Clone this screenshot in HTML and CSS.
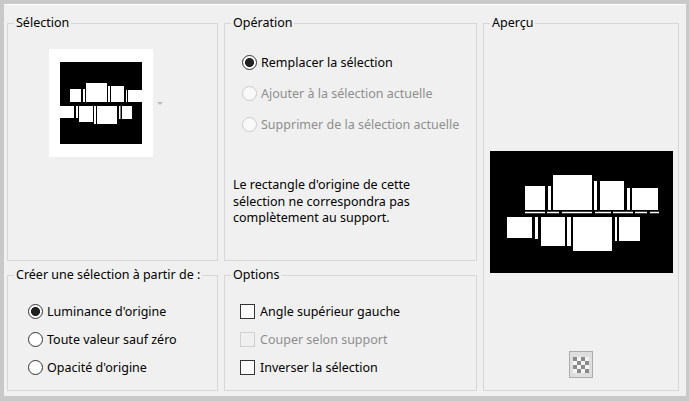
FILE: index.html
```html
<!DOCTYPE html>
<html lang="fr">
<head>
    <meta charset="UTF-8">
    <title>Sélection</title>
    <link rel="stylesheet" href="styles.css">
</head>
<body>
    <div class="dialog">
        <!-- Source selection -->
        <fieldset class="group">
            <legend class="group__title">Sélection</legend>
            <div class="thumb-row">
                <div class="thumb">
                    <svg width="82" height="82" viewBox="0 0 82 82">
                        <rect width="82" height="82" fill="#000"/>
                        <g fill="#fff">
                            <rect x="10" y="27" width="11" height="13"/>
                            <rect x="23" y="27" width="2" height="13"/>
                            <rect x="26" y="21" width="21" height="19"/>
                            <rect x="48" y="24" width="2" height="16"/>
                            <rect x="51" y="24" width="13" height="16"/>
                            <rect x="66" y="28" width="1" height="12"/>
                            <rect x="68" y="28" width="14" height="12"/>
                            <rect x="0" y="44" width="14" height="12"/>
                            <rect x="16" y="44" width="2" height="12"/>
                            <rect x="19" y="44" width="14" height="16"/>
                            <rect x="34" y="44" width="2" height="18"/>
                            <rect x="37" y="44" width="20" height="18"/>
                            <rect x="59" y="44" width="1.5" height="13"/>
                            <rect x="62" y="44" width="10" height="13"/>
                        </g>
                    </svg>
                </div>
                <span class="drop-arrow"></span>
            </div>
        </fieldset>

        <!-- Operation -->
        <fieldset class="group">
            <legend class="group__title">Opération</legend>
            <div class="choices choices--op">
                <label class="opt"><input type="radio" name="op" class="radio" checked>Remplacer la sélection</label>
                <label class="opt opt--off"><input type="radio" name="op" class="radio" disabled>Ajouter à la sélection actuelle</label>
                <label class="opt opt--off"><input type="radio" name="op" class="radio" disabled>Supprimer de la sélection actuelle</label>
            </div>
            <p class="note">Le rectangle d'origine de cette<br>sélection ne correspondra pas<br>complètement au support.</p>
        </fieldset>

        <!-- Preview -->
        <fieldset class="group group--preview">
            <legend class="group__title">Aperçu</legend>
            <div class="preview">
                <svg class="preview__img" width="183" height="122" viewBox="0 0 183 122">
                    <rect width="183" height="122" fill="#000"/>
                    <g fill="#fff">
                        <rect x="35" y="35" width="20" height="24"/>
                        <rect x="58" y="35" width="3" height="24"/>
                        <rect x="63" y="24" width="39" height="35"/>
                        <rect x="104" y="30" width="3" height="29"/>
                        <rect x="110" y="30" width="24" height="29"/>
                        <rect x="137" y="37" width="3" height="22"/>
                        <rect x="142" y="37" width="26" height="22"/>
                        <rect x="17" y="66" width="25" height="21"/>
                        <rect x="45" y="66" width="3" height="22"/>
                        <rect x="51" y="66" width="24" height="29"/>
                        <rect x="77" y="66" width="4" height="29"/>
                        <rect x="83" y="66" width="39" height="34"/>
                        <rect x="125" y="66" width="2" height="24"/>
                        <rect x="129" y="66" width="21" height="24"/>
                    </g>
                    <line x1="35" y1="61.5" x2="169" y2="61.5" stroke="#fff" stroke-width="1.5" stroke-dasharray="20 2 12 3 30 3 16 2"/>
                </svg>
                <div class="swatch"><span class="swatch__checker"></span></div>
            </div>
        </fieldset>

        <!-- Create from -->
        <fieldset class="group">
            <legend class="group__title">Créer une sélection à partir de :</legend>
            <div class="choices choices--src">
                <label class="opt"><input type="radio" name="src" class="radio" checked>Luminance d'origine</label>
                <label class="opt"><input type="radio" name="src" class="radio">Toute valeur sauf zéro</label>
                <label class="opt"><input type="radio" name="src" class="radio">Opacité d'origine</label>
            </div>
        </fieldset>

        <!-- Options -->
        <fieldset class="group">
            <legend class="group__title">Options</legend>
            <div class="choices choices--opts">
                <label class="opt opt--check"><input type="checkbox" class="check">Angle supérieur gauche</label>
                <label class="opt opt--check opt--off"><input type="checkbox" class="check" disabled>Couper selon support</label>
                <label class="opt opt--check"><input type="checkbox" class="check">Inverser la sélection</label>
            </div>
        </fieldset>
    </div>
</body>
</html>
```

FILE: styles.css
```css
:root {
	/* COLORS */
	--frame: #c9c9c9;
	--face: #f0f0f0;
	--line: #d7d7d7;
	--ink: #000;
	--muted: #8e8e8e;

	font-size: 12.5px;
	font-family: "Noto Sans", "Open Sans", sans-serif;
}

body {
	background-color: var(--frame);
	color: var(--ink);
	margin: 0;
}

.dialog {
	background-color: var(--face);
	border-top: 1px solid #fff;
	box-sizing: border-box;
	display: grid;
	gap: 6px;
	grid-template-columns: 211px 253px 196px;
	grid-template-rows: 246px 124px;
	height: 392px;
	margin: 4px 3px 5px 4px;
	padding: 10px 0 0 3px;
}

.group {
	border: 1px solid var(--line);
	margin: 0;
	min-width: 0;
	padding: 0;
}

.group--preview {
	grid-column: 3;
	grid-row: 1 / span 2;
}

.group__title {
	line-height: 16px;
	margin-left: 6px;
	padding: 0 2px;
}

/* thumbnail */
.thumb-row {
	align-items: center;
	display: flex;
	gap: 4px;
	margin: 18px 0 0 41px;
}

.thumb {
	align-items: center;
	background-color: #fff;
	display: flex;
	height: 108px;
	justify-content: center;
	width: 104px;
}

.thumb svg,
.preview__img {
	display: block;
}

.drop-arrow {
	border-left: 3px solid transparent;
	border-right: 3px solid transparent;
	border-top: 3px solid #b8b8b8;
	height: 0;
	width: 0;
}

/* radio / checkbox lists */
.choices {
	display: flex;
	flex-direction: column;
}

.choices--op {
	padding: 16px 0 0 17px;
}

.choices--src {
	padding: 14px 0 0 20px;
}

.choices--opts {
	padding: 14px 0 0 15px;
}

.opt {
	align-items: center;
	display: flex;
	gap: 4px;
	height: 28px;
	white-space: nowrap;
}

.choices--op .opt {
	height: 31px;
}

.opt--check {
	gap: 5px;
}

.opt--off {
	color: var(--muted);
}

.radio {
	appearance: none;
	background-color: #fff;
	border: 1px solid #333;
	border-radius: 50%;
	box-sizing: border-box;
	flex: none;
	height: 15px;
	margin: 0;
	width: 15px;
}

.radio:checked {
	background: radial-gradient(circle, #222 0 4.2px, #fff 4.8px);
}

.radio:disabled {
	background-color: #f9f9f9;
	border-color: #cacaca;
}

.check {
	appearance: none;
	background-color: #fbfbfb;
	border: 1px solid #333;
	box-sizing: border-box;
	flex: none;
	height: 15px;
	margin: 0;
	width: 15px;
}

.check:disabled {
	background-color: var(--face);
	border-color: #d0d0d0;
}

.note {
	line-height: 16.5px;
	margin: 37px 0 0 8px;
}

/* preview */
.preview {
	align-items: center;
	display: flex;
	flex-direction: column;
	padding-top: 120px;
}

.swatch {
	align-items: center;
	background-color: #dedede;
	border: 1px solid #ababab;
	box-sizing: border-box;
	display: flex;
	height: 27px;
	justify-content: center;
	margin-top: 78px;
	width: 24px;
}

.swatch__checker {
	background: repeating-conic-gradient(#f4f4f4 0 25%, #8a8a8a 0 50%) 0 0 / 8px 8px;
	height: 16px;
	width: 16px;
}
```
